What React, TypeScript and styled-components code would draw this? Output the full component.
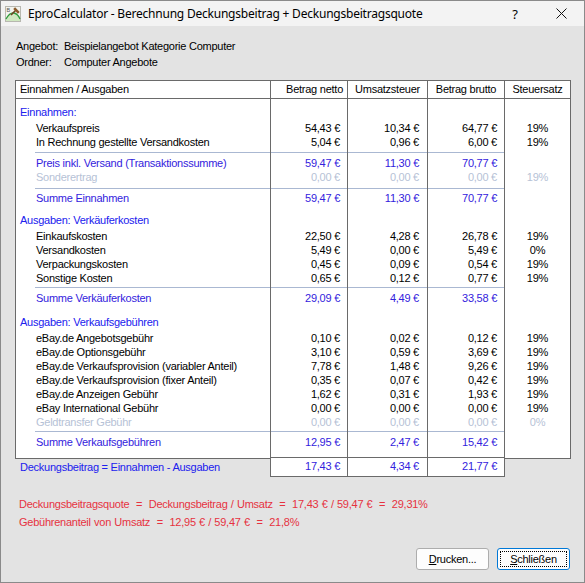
import React from 'react';
import styled, { createGlobalStyle } from 'styled-components';

const Global = createGlobalStyle`
  html, body { margin: 0; padding: 0; background: #e3e3e3; }
  body { width: 585px; height: 583px; overflow: hidden; }
`;

const C = {
  line: '#6a6a6a',
  sep: '#aab8d2',
  blue: '#2020ee',
  sum: '#3322dd',
  dis: '#b6c2d6',
  red: '#e6323f',
};

const Window = styled.div`
  width: 585px;
  height: 583px;
  box-sizing: border-box;
  border: 1px solid #8a8a8a;
  background: #e3e3e3;
  display: flex;
  flex-direction: column;
  font-family: 'Liberation Sans', Arial, sans-serif;
  font-size: 11px;
  letter-spacing: -0.25px;
  color: #000;
`;

const TitleBar = styled.div`
  height: 25px;
  flex: none;
  background: #f3f3f3;
  display: flex;
  align-items: center;
  font-family: 'Noto Sans', 'Open Sans', sans-serif;
  font-size: 12px;
  letter-spacing: -0.22px;
`;

const TitleIcon = styled.svg`
  width: 16px;
  height: 16px;
  margin: 0 7px 0 4px;
  flex: none;
`;

const TitleText = styled.div`
  flex: 1;
  white-space: nowrap;
  color: #000;
`;

const CaptionBtn = styled.div`
  width: 46px;
  height: 25px;
  display: flex;
  align-items: center;
  justify-content: center;
  font-size: 13px;
  letter-spacing: 0;
`;

const Body = styled.div`
  flex: 1;
  display: flex;
  flex-direction: column;
  padding: 13px 13px 12px 14px;
`;

const InfoRow = styled.div<{ $mt?: number }>`
  display: flex;
  height: 14px;
  line-height: 14px;
  margin-top: ${(p) => p.$mt ?? 0}px;
`;

const InfoKey = styled.span`
  width: 48px;
  padding-left: 1px;
`;

const Table = styled.div`
  display: flex;
  align-items: flex-start;
  margin-top: 11px;
`;

const FirstCol = styled.div`
  width: 255px;
  display: flex;
  flex-direction: column;
`;

const Box = styled.div<{ $w: number; $l?: boolean; $r?: boolean; $b?: boolean }>`
  width: ${(p) => p.$w}px;
  box-sizing: border-box;
  background: #fff;
  border-top: 1px solid ${C.line};
  border-left: ${(p) => (p.$l ? `1px solid ${C.line}` : 'none')};
  border-right: ${(p) => (p.$r ? `1px solid ${C.line}` : 'none')};
  border-bottom: ${(p) => (p.$b ? `1px solid ${C.line}` : 'none')};
  display: flex;
  flex-direction: column;
`;

const Head = styled.div<{ $align: string; $pr: number; $pl: number }>`
  height: 17px;
  line-height: 17px;
  border-bottom: 1px solid ${C.line};
  text-align: ${(p) => p.$align};
  padding: 0 ${(p) => p.$pr}px 0 ${(p) => p.$pl}px;
  white-space: nowrap;
`;

const ColBody = styled.div<{ $bottom?: boolean }>`
  display: flex;
  flex-direction: column;
  padding-top: 6px;
  height: 359px;
  box-sizing: border-box;
  border-bottom: ${(p) => (p.$bottom ? `1px solid ${C.line}` : 'none')};
`;

type Kind = 'section' | 'item' | 'sum' | 'dis' | 'blank';

const colorOf = (k: Kind) =>
  k === 'section' ? C.blue : k === 'sum' ? C.sum : k === 'dis' ? C.dis : '#000';

const Cell = styled.div<{ $kind: Kind; $align: string; $pl: number; $pr: number }>`
  height: 14px;
  line-height: 14px;
  white-space: nowrap;
  color: ${(p) => colorOf(p.$kind)};
  text-align: ${(p) => p.$align};
  padding: 0 ${(p) => p.$pr}px 0 ${(p) => p.$pl}px;
`;

const Gap = styled.div<{ $h: number }>`
  height: ${(p) => p.$h}px;
  flex: none;
`;

const Sep = styled.div<{ $ml: number; $show: boolean }>`
  height: 1px;
  flex: none;
  margin-left: ${(p) => p.$ml}px;
  background: ${(p) => (p.$show ? C.sep : 'transparent')};
`;

const TotalCell = styled.div<{ $pr: number }>`
  height: 19px;
  line-height: 17px;
  text-align: right;
  padding-right: ${(p) => p.$pr}px;
  color: ${C.sum};
  border-bottom: 1px solid ${C.line};
  box-sizing: border-box;
`;

const OutsideLabel = styled.div`
  height: 18px;
  line-height: 17px;
  padding-left: 5px;
  color: ${C.blue};
  white-space: nowrap;
`;

const RedLine = styled.div<{ $mt: number }>`
  color: ${C.red};
  height: 14px;
  line-height: 14px;
  margin-top: ${(p) => p.$mt}px;
  padding-left: 4px;
  white-space: pre;
  word-spacing: 0.5px;
`;

const Buttons = styled.div`
  margin-top: auto;
  display: flex;
  justify-content: flex-end;
  gap: 8px;
  padding-right: 1px;
`;

const Button = styled.div<{ $default?: boolean }>`
  width: 73px;
  height: 22px;
  box-sizing: border-box;
  border: 1px solid ${(p) => (p.$default ? '#0078d7' : '#adadad')};
  border-radius: 3px;
  background: #fdfdfd;
  display: flex;
  align-items: stretch;
  justify-content: center;
  padding: 2px;
`;

const ButtonLabel = styled.span<{ $focus?: boolean }>`
  flex: 1;
  display: flex;
  align-items: center;
  justify-content: center;
  box-sizing: border-box;
  border: 1px ${(p) => (p.$focus ? 'dotted #000' : 'solid transparent')};
`;

type Entry =
  | { t: 'gap'; h: number }
  | { t: 'sep' }
  | { t: 'row'; kind: Kind; label: string; v?: [string, string, string]; p?: string };

const E = (kind: Kind, label: string, v?: [string, string, string], p?: string): Entry => ({
  t: 'row',
  kind,
  label,
  v,
  p,
});
const G = (h: number): Entry => ({ t: 'gap', h });
const S: Entry = { t: 'sep' };
const Z: [string, string, string] = ['0,00 €', '0,00 €', '0,00 €'];

const rows: Entry[] = [
  E('section', 'Einnahmen:'),
  G(2),
  E('item', 'Verkaufspreis', ['54,43 €', '10,34 €', '64,77 €'], '19%'),
  E('item', 'In Rechnung gestellte Versandkosten', ['5,04 €', '0,96 €', '6,00 €'], '19%'),
  G(3),
  S,
  G(3),
  E('sum', 'Preis inkl. Versand (Transaktionssumme)', ['59,47 €', '11,30 €', '70,77 €']),
  E('dis', 'Sonderertrag', Z, '19%'),
  G(4),
  S,
  G(2),
  E('sum', 'Summe Einnahmen', ['59,47 €', '11,30 €', '70,77 €']),
  G(8),
  E('section', 'Ausgaben: Verkäuferkosten'),
  G(2),
  E('item', 'Einkaufskosten', ['22,50 €', '4,28 €', '26,78 €'], '19%'),
  E('item', 'Versandkosten', ['5,49 €', '0,00 €', '5,49 €'], '0%'),
  E('item', 'Verpackungskosten', ['0,45 €', '0,09 €', '0,54 €'], '19%'),
  E('item', 'Sonstige Kosten', ['0,65 €', '0,12 €', '0,77 €'], '19%'),
  G(2),
  S,
  G(3),
  E('sum', 'Summe Verkäuferkosten', ['29,09 €', '4,49 €', '33,58 €']),
  G(10),
  E('section', 'Ausgaben: Verkaufsgebühren'),
  G(2),
  E('item', 'eBay.de Angebotsgebühr', ['0,10 €', '0,02 €', '0,12 €'], '19%'),
  E('item', 'eBay.de Optionsgebühr', ['3,10 €', '0,59 €', '3,69 €'], '19%'),
  E('item', 'eBay.de Verkaufsprovision (variabler Anteil)', ['7,78 €', '1,48 €', '9,26 €'], '19%'),
  E('item', 'eBay.de Verkaufsprovision (fixer Anteil)', ['0,35 €', '0,07 €', '0,42 €'], '19%'),
  E('item', 'eBay.de Anzeigen Gebühr', ['1,62 €', '0,31 €', '1,93 €'], '19%'),
  E('item', 'eBay International Gebühr', ['0,00 €', '0,00 €', '0,00 €'], '19%'),
  E('dis', 'Geldtransfer Gebühr', Z, '0%'),
  G(2),
  S,
  G(3),
  E('sum', 'Summe Verkaufsgebühren', ['12,95 €', '2,47 €', '15,42 €']),
];

const renderColumn = (col: number, opts: { align: string; pl: number; pr: number; sepMl: number; sep: boolean }) =>
  rows.map((r, i) => {
    if (r.t === 'gap') return <Gap key={i} $h={r.h} />;
    if (r.t === 'sep') return <Sep key={i} $ml={opts.sepMl} $show={opts.sep} />;
    let text = '';
    let pl = opts.pl;
    if (col === 0) {
      text = r.label;
      pl = r.kind === 'section' ? 4 : 20;
    } else if (col <= 3) {
      text = r.v ? r.v[col - 1] : '';
    } else {
      text = r.p ?? '';
    }
    return (
      <Cell key={i} $kind={r.kind} $align={opts.align} $pl={pl} $pr={opts.pr}>
        {text}
      </Cell>
    );
  });

const AppIcon = () => (
  <TitleIcon viewBox="0 0 16 16">
    <rect x="0.5" y="0.5" width="15" height="15" fill="#f4f4ee" stroke="#b8b8b0" />
    <path d="M1 15 L1 13 Q5 6 9 7 Q13 8 15 13 L15 15 Z" fill="#cfe8c0" />
    <path d="M1 13 Q5 6 9 7 Q13 8 15 13" fill="none" stroke="#2e9a3a" strokeWidth="1.3" />
    <text x="1.5" y="6" fontSize="5.5" fontFamily="Liberation Sans" fill="#555">B</text>
    <path d="M6 9 L11 4" stroke="#6b4420" strokeWidth="1.6" />
    <path d="M9.2 2.2 L13.8 6.8" stroke="#8a5a2a" strokeWidth="2.6" />
  </TitleIcon>
);

const CloseGlyph = () => (
  <svg width="11" height="11" viewBox="0 0 11 11">
    <path d="M0.5 0.5 L10.5 10.5 M10.5 0.5 L0.5 10.5" stroke="#111" strokeWidth="1" />
  </svg>
);

export default function App() {
  return (
    <>
      <Global />
      <Window>
        <TitleBar>
          <AppIcon />
          <TitleText>EproCalculator - Berechnung Deckungsbeitrag + Deckungsbeitragsquote</TitleText>
          <CaptionBtn>?</CaptionBtn>
          <CaptionBtn>
            <CloseGlyph />
          </CaptionBtn>
        </TitleBar>
        <Body>
          <InfoRow>
            <InfoKey>Angebot:</InfoKey>
            <span>Beispielangebot Kategorie Computer</span>
          </InfoRow>
          <InfoRow $mt={2}>
            <InfoKey>Ordner:</InfoKey>
            <span>Computer Angebote</span>
          </InfoRow>

          <Table>
            <FirstCol>
              <Box $w={255} $l $b>
                <Head $align="left" $pl={4} $pr={0}>
                  Einnahmen / Ausgaben
                </Head>
                <ColBody>{renderColumn(0, { align: 'left', pl: 20, pr: 0, sepMl: 19, sep: true })}</ColBody>
              </Box>
              <OutsideLabel>Deckungsbeitrag = Einnahmen - Ausgaben</OutsideLabel>
            </FirstCol>

            <Box $w={77} $l>
              <Head $align="right" $pl={0} $pr={4}>
                Betrag netto
              </Head>
              <ColBody $bottom>{renderColumn(1, { align: 'right', pl: 0, pr: 7, sepMl: 0, sep: true })}</ColBody>
              <TotalCell $pr={7}>17,43 €</TotalCell>
            </Box>

            <Box $w={80} $l>
              <Head $align="center" $pl={0} $pr={0}>
                Umsatzsteuer
              </Head>
              <ColBody $bottom>{renderColumn(2, { align: 'right', pl: 0, pr: 8, sepMl: 0, sep: true })}</ColBody>
              <TotalCell $pr={8}>4,34 €</TotalCell>
            </Box>

            <Box $w={78} $l $r>
              <Head $align="center" $pl={0} $pr={0}>
                Betrag brutto
              </Head>
              <ColBody $bottom>{renderColumn(3, { align: 'right', pl: 0, pr: 7, sepMl: 0, sep: true })}</ColBody>
              <TotalCell $pr={7}>21,77 €</TotalCell>
            </Box>

            <Box $w={66} $r $b>
              <Head $align="center" $pl={0} $pr={0}>
                Steuersatz
              </Head>
              <ColBody>{renderColumn(4, { align: 'center', pl: 0, pr: 0, sepMl: 0, sep: false })}</ColBody>
            </Box>
          </Table>

          <RedLine $mt={20}>
            {'Deckungsbeitragsquote  =  Deckungsbeitrag / Umsatz  =  17,43 € / 59,47 €  =  29,31%'}
          </RedLine>
          <RedLine $mt={4}>{'Gebührenanteil von Umsatz  =  12,95 € / 59,47 €  =  21,8%'}</RedLine>

          <Buttons>
            <Button>
              <ButtonLabel>
                <span>
                  <u>D</u>rucken...
                </span>
              </ButtonLabel>
            </Button>
            <Button $default>
              <ButtonLabel $focus>
                <span>
                  <u>S</u>chließen
                </span>
              </ButtonLabel>
            </Button>
          </Buttons>
        </Body>
      </Window>
    </>
  );
}
